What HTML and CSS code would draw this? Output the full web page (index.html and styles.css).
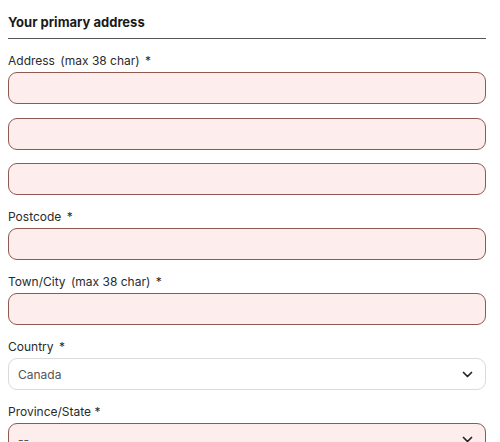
FILE: index.html
```html
<!DOCTYPE html>
<html>
<head>
<meta charset="utf-8">
<link rel="stylesheet" href="styles.css">
</head>
<body>
<form class="form">
  <h2 class="title">Your primary address</h2>
  <div class="group">
    <label class="label">Address <span class="gap"></span>(max 38 char) <span class="gap"></span>*</label>
    <div class="input error"></div>
    <div class="input error"></div>
    <div class="input error"></div>
  </div>
  <div class="group">
    <label class="label">Postcode <span class="gap"></span>*</label>
    <div class="input error"></div>
  </div>
  <div class="group">
    <label class="label">Town/City <span class="gap"></span>(max 38 char) <span class="gap"></span>*</label>
    <div class="input error"></div>
  </div>
  <div class="group">
    <label class="label">Country <span class="gap"></span>*</label>
    <div class="input select"><span class="value">Canada</span>
      <svg class="chev" width="11" height="7" viewBox="0 0 11 7"><path d="M1.5 1.5l4 4 4-4" fill="none" stroke="#222" stroke-width="1.7" stroke-linecap="round" stroke-linejoin="round"/></svg>
    </div>
  </div>
  <div class="group">
    <label class="label">Province/State *</label>
    <div class="input select error"><span class="value">--</span>
      <svg class="chev" width="11" height="7" viewBox="0 0 11 7"><path d="M1.5 1.5l4 4 4-4" fill="none" stroke="#222" stroke-width="1.7" stroke-linecap="round" stroke-linejoin="round"/></svg>
    </div>
  </div>
</form>
</body>
</html>
```
FILE: styles.css
```css
html, body { margin: 0; padding: 0; background: #fff; }
body { font-family: Inter, "Noto Sans", sans-serif; color: #222; }
.form { width: 478px; margin-left: 8px; padding-top: 13px; display: flex; flex-direction: column; gap: 14px; }
.title { margin: 0; font-size: 13px; font-weight: 700; line-height: 19px; color: #1a1a1a; padding-bottom: 6px; border-bottom: 1px solid #555; }
.group { display: flex; flex-direction: column; gap: 13px; }
.label { font-size: 12px; line-height: 16px; color: #2a2a2a; margin-bottom: -10px; }
.gap { display: inline-block; width: 2px; }
.input { box-sizing: border-box; height: 32px; border-radius: 9px; border: 1px solid #dadada; background: #fff; display: flex; align-items: center; padding: 0 9px; }
.input + .input { margin-top: 0.5px; }
.input.error { background: #fdeeed; border-color: #8e5a50; }
.select { justify-content: space-between; padding-right: 12px; }
.value { font-size: 12px; color: #555; }
.chev { display: block; }
```
